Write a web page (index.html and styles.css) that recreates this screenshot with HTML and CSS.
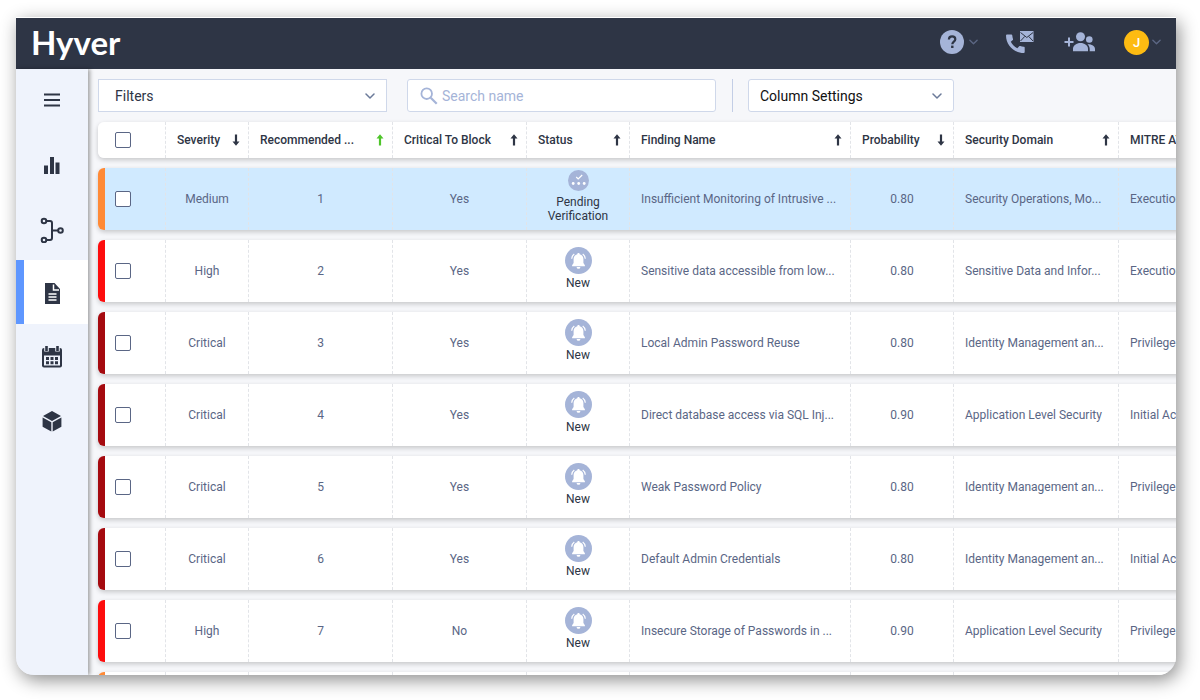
FILE: index.html
```html
<!DOCTYPE html>
<html lang="en">
<head>
<meta charset="utf-8">
<title>Hyver</title>
<link rel="stylesheet" href="styles.css">
</head>
<body>
<svg class="sprite" aria-hidden="true">
  <symbol id="chevron" viewBox="0 0 10 6"><path d="M1 1l4 4 4-4" fill="none" stroke="currentColor" stroke-width="1.5" stroke-linecap="round" stroke-linejoin="round"/></symbol>
  <symbol id="up" viewBox="0 0 8 12"><path d="M4 .3L7.500 4.500H5.100V11.500H2.900V4.500H.5z" fill="currentColor"/></symbol>
  <symbol id="down" viewBox="0 0 8 12"><path d="M4 11.700L.5 7.500H2.900V.5H5.100V7.500H7.500z" fill="currentColor"/></symbol>
  <symbol id="bell" viewBox="0 0 27 27"><circle cx="13.500" cy="13.500" r="13.500" fill="#a5b4d8"/><path d="M13.500 6c.7 0 1.200.5 1.200 1.200 2.500.6 3.700 2.500 3.700 4.800v4l1.500 2.300v.9H7.100v-.9l1.500-2.300v-4c0-2.300 1.200-4.200 3.700-4.800 0-.7.500-1.200 1.200-1.200zM11.600 19.900h3.800a1.900 1.900 0 0 1-3.800 0z" fill="#fff"/><path d="M9.300 6.900C7.700 8 6.900 9.600 6.700 11.700M17.700 6.900c1.600 1.100 2.400 2.700 2.600 4.800" fill="none" stroke="#fff" stroke-width="1.200"/></symbol>
  <symbol id="pending" viewBox="0 0 21 21"><circle cx="10.500" cy="10.500" r="10.500" fill="#a5b4d8"/><path d="M8.200 7l2 2 4-4" fill="none" stroke="#fff" stroke-width="1.200"/><g fill="#fff"><circle cx="5.200" cy="13.500" r="1.400"/><circle cx="10.700" cy="13.500" r="1.400"/><circle cx="16.200" cy="13.500" r="1.400"/></g></symbol>
</svg>

<div class="window">
  <header class="topbar">
    <div class="brand">Hyver</div>
    <div class="actions">
      <button class="icon-btn help" aria-label="Help">
        <svg width="24" height="24" viewBox="0 0 24 24"><circle cx="12" cy="12" r="12" fill="#a5b4d8"/><path d="M8.900 9.600c0-2 1.300-3.200 3.200-3.200s3.200 1.100 3.200 2.800c0 2.400-3 2.500-3 5" fill="none" stroke="#2e3545" stroke-width="2.200"/><rect x="11.100" y="15.600" width="2.400" height="2.400" fill="#2e3545"/></svg>
        <svg class="chev" width="9" height="6"><use href="#chevron"/></svg>
      </button>
      <button class="icon-btn contact" aria-label="Contact">
        <svg width="28" height="24" viewBox="0 0 28 24"><path d="M1 4.500h4.300c.6 0 .9.300 1 .9.100 1.300.3 2.400.7 3.500.100.400 0 .8-.2 1.100L4.800 11.800c1.500 3 3.600 5 6.500 6.500l1.900-2c.3-.3.700-.4 1.100-.2 1.100.4 2.200.6 3.400.6.600 0 1 .4 1 .9V22c0 .6-.4.900-1 .9C8 22.900 0 15 0 5.400c0-.6.400-.9 1-.9z" fill="#a5b4d8"/><rect x="14" y="1" width="13.500" height="11" fill="#a5b4d8"/><path d="M14.500 2.500l6.300 5 6.300-5M14.500 11l4.300-4.600M27 11l-4.300-4.600" fill="none" stroke="#2e3545"/></svg>
      </button>
      <button class="icon-btn invite" aria-label="Invite users">
        <svg width="32" height="20" viewBox="0 0 32 20"><path d="M5 5.500v9M.5 10h9" stroke="#a5b4d8" stroke-width="2"/><g fill="#a5b4d8"><circle cx="16.500" cy="4.700" r="4.500"/><path d="M9 19.300v-2.500c0-3.300 3.500-5.800 7.500-5.800s7.500 2.500 7.500 5.800v2.500z"/><circle cx="25.300" cy="7.500" r="3.300"/><path d="M23.500 12.200c4.500 0 7.500 2 7.500 4.800v2.300h-5.300v-2.300c0-2-.8-3.500-2.200-4.800z"/></g></svg>
      </button>
      <button class="icon-btn account" aria-label="Account">
        <span class="avatar">J</span>
        <svg class="chev" width="9" height="6"><use href="#chevron"/></svg>
      </button>
    </div>
  </header>

  <div class="body">
    <nav class="sidebar">
      <button class="nav-item menu" aria-label="Menu"><svg width="24" height="24" viewBox="0 0 24 24"><path d="M4 5.500h16M4 11h16M4 16.500h16" stroke="currentColor" stroke-width="2"/></svg></button>
      <a class="nav-item" href="#dashboard" aria-label="Dashboard"><svg width="24" height="28" viewBox="0 0 24 28"><path d="M4 15.500h4V24H4zM10 7h4v17h-4zM15.500 12.500h4V24h-4z" fill="currentColor"/></svg></a>
      <a class="nav-item" href="#paths" aria-label="Attack paths"><svg width="24" height="30" viewBox="0 0 24 30"><g fill="none" stroke="currentColor" stroke-width="2"><circle cx="4" cy="8" r="2.300"/><circle cx="4" cy="27" r="2.300"/><circle cx="20.500" cy="17.500" r="2.300"/><path d="M6.300 8H10q2 0 2 2v15q0 2-2 2H6.300M12 17.500h6.200"/></g></svg></a>
      <a class="nav-item active" href="#findings" aria-label="Findings" aria-current="page"><svg width="24" height="24" viewBox="0 0 24 24"><path d="M5 3h9.500L20 9v15H5z" fill="currentColor"/><path d="M13.500 4.500V10H19" fill="none" stroke="#fff" stroke-width="1.500"/><path d="M8.500 14h8M8.500 17h8M8.500 20h8" stroke="#fff" stroke-width="1.300"/></svg></a>
      <a class="nav-item" href="#calendar" aria-label="Calendar"><svg width="24" height="24" viewBox="0 0 24 24"><path d="M4 4h16q2 0 2 2v15.500q0 2-2 2H4q-2 0-2-2V6q0-2 2-2z" fill="currentColor"/><path d="M4 11.500h16v10H4z" fill="#eff3fc"/><path d="M6.500 2.500v5M17.500 2.500v5" stroke="#eff3fc" stroke-width="4.500"/><path d="M6.500 2v5M17.500 2v5" stroke="currentColor" stroke-width="2.600"/><path d="M6 14.500h12M6 18.700h12" stroke="currentColor" stroke-width="3" stroke-dasharray="3 1.500"/></svg></a>
      <a class="nav-item" href="#assets" aria-label="Assets"><svg width="24" height="24" viewBox="0 0 24 24"><path d="M12 3l9 5-9 5-9-5zM2.600 9.500l8.700 4.800v9.300L2.600 18.700zM21.400 9.500l-8.700 4.800v9.300l8.700-4.900z" fill="currentColor"/></svg></a>
    </nav>

    <main class="content">
      <div class="toolbar">
        <div class="select filters"><select aria-label="Filters"><option>Filters</option></select><svg width="10" height="6"><use href="#chevron"/></svg></div>
        <label class="search"><svg width="18" height="18" viewBox="0 0 18 18"><circle cx="6.700" cy="6.700" r="5.300" fill="none" stroke="currentColor" stroke-width="1.800"/><path d="M10.700 10.700l6 6" stroke="currentColor" stroke-width="2.200"/></svg><input type="text" placeholder="Search name" aria-label="Search name"></label>
        <div class="divider"></div>
        <div class="select columns"><select aria-label="Column Settings"><option>Column Settings</option></select><svg width="10" height="6"><use href="#chevron"/></svg></div>
      </div>

      <table class="findings">
        <colgroup><col class="c-check"><col class="c-severity"><col class="c-order"><col class="c-block"><col class="c-status"><col class="c-name"><col class="c-prob"><col class="c-domain"><col class="c-mitre"></colgroup>
        <thead>
          <tr>
            <th><input type="checkbox" aria-label="Select all"></th>
            <th><button class="sort">Severity<svg width="8" height="12"><use href="#down"/></svg></button></th>
            <th><button class="sort sorted">Recommended ...<svg width="8" height="12"><use href="#up"/></svg></button></th>
            <th><button class="sort">Critical To Block<svg width="8" height="12"><use href="#up"/></svg></button></th>
            <th><button class="sort">Status<svg width="8" height="12"><use href="#up"/></svg></button></th>
            <th><button class="sort">Finding Name<svg width="8" height="12"><use href="#up"/></svg></button></th>
            <th><button class="sort">Probability<svg width="8" height="12"><use href="#down"/></svg></button></th>
            <th><button class="sort">Security Domain<svg width="8" height="12"><use href="#up"/></svg></button></th>
            <th><button class="sort">MITRE ATT&amp;CK</button></th>
          </tr>
        </thead>
        <tbody>
          <tr class="medium selected"><td><input type="checkbox" aria-label="Select finding 1"></td><td>Medium</td><td>1</td><td>Yes</td><td class="status pending"><svg width="21" height="21"><use href="#pending"/></svg><span>Pending Verification</span></td><td class="text">Insufficient Monitoring of Intrusive ...</td><td>0.80</td><td class="text">Security Operations, Mo...</td><td class="text">Execution</td></tr>
          <tr class="high"><td><input type="checkbox" aria-label="Select finding 2"></td><td>High</td><td>2</td><td>Yes</td><td class="status"><svg width="27" height="27"><use href="#bell"/></svg><span>New</span></td><td class="text">Sensitive data accessible from low...</td><td>0.80</td><td class="text">Sensitive Data and Infor...</td><td class="text">Execution</td></tr>
          <tr class="critical"><td><input type="checkbox" aria-label="Select finding 3"></td><td>Critical</td><td>3</td><td>Yes</td><td class="status"><svg width="27" height="27"><use href="#bell"/></svg><span>New</span></td><td class="text">Local Admin Password Reuse</td><td>0.80</td><td class="text">Identity Management an...</td><td class="text">Privilege Escalation</td></tr>
          <tr class="critical"><td><input type="checkbox" aria-label="Select finding 4"></td><td>Critical</td><td>4</td><td>Yes</td><td class="status"><svg width="27" height="27"><use href="#bell"/></svg><span>New</span></td><td class="text">Direct database access via SQL Inj...</td><td>0.90</td><td class="text">Application Level Security</td><td class="text">Initial Access</td></tr>
          <tr class="critical"><td><input type="checkbox" aria-label="Select finding 5"></td><td>Critical</td><td>5</td><td>Yes</td><td class="status"><svg width="27" height="27"><use href="#bell"/></svg><span>New</span></td><td class="text">Weak Password Policy</td><td>0.80</td><td class="text">Identity Management an...</td><td class="text">Privilege Escalation</td></tr>
          <tr class="critical"><td><input type="checkbox" aria-label="Select finding 6"></td><td>Critical</td><td>6</td><td>Yes</td><td class="status"><svg width="27" height="27"><use href="#bell"/></svg><span>New</span></td><td class="text">Default Admin Credentials</td><td>0.80</td><td class="text">Identity Management an...</td><td class="text">Initial Access</td></tr>
          <tr class="high"><td><input type="checkbox" aria-label="Select finding 7"></td><td>High</td><td>7</td><td>No</td><td class="status"><svg width="27" height="27"><use href="#bell"/></svg><span>New</span></td><td class="text">Insecure Storage of Passwords in ...</td><td>0.90</td><td class="text">Application Level Security</td><td class="text">Privilege Escalation</td></tr>
          <tr class="medium"><td></td><td></td><td></td><td></td><td></td><td></td><td></td><td></td><td></td></tr>
        </tbody>
      </table>
    </main>
  </div>
</div>
</body>
</html>
```
FILE: styles.css
```css
* { box-sizing: border-box; }

body {
  margin: 0;
  padding: 17px 24px 25px 16px;
  height: 100vh;
  overflow: hidden;
  background: #fff;
  font-family: Roboto, "Liberation Sans", sans-serif;
  font-size: 12px;
  color: #2e3545;
}

button, input, select { font: inherit; color: inherit; }
button { padding: 0; border: 0; background: none; }
svg { display: block; flex: none; }
.sprite { position: absolute; width: 0; height: 0; }

.window {
  height: 100%;
  display: flex;
  flex-direction: column;
  overflow: hidden;
  border-top: 1px solid #fff;
  border-radius: 0 0 18px 18px;
  background: #f6f7fa;
  box-shadow: 3px 5px 18px rgba(0, 0, 0, .45);
}

.topbar {
  flex: none;
  height: 51px;
  display: flex;
  align-items: center;
  justify-content: space-between;
  padding: 0 15px 3px;
  background: #2e3545;
}

.brand {
  font: 700 33px/40px Lato, sans-serif;
  color: #fff;
}

.actions { display: flex; align-items: center; gap: 28px; }
.icon-btn { display: flex; align-items: center; gap: 5px; }
.invite { margin-left: 2px; }
.account { gap: 3px; }
.chev { color: #5c6784; }

.avatar {
  width: 25px;
  height: 25px;
  border-radius: 50%;
  background: #fdbb12;
  color: #fff;
  font-size: 13px;
  font-weight: 500;
  line-height: 25px;
  text-align: center;
}

.body { flex: 1; min-height: 0; display: flex; }

.sidebar {
  flex: none;
  width: 72px;
  z-index: 1;
  background: #eff3fc;
  box-shadow: 2px 0 4px rgba(0, 0, 0, .35);
}

.nav-item {
  width: 100%;
  height: 64px;
  display: flex;
  align-items: center;
  justify-content: center;
  color: #2e3545;
}
.nav-item.menu { height: 63px; }
.nav-item.active {
  background: #fff;
  border-left: 8px solid #5f97ff;
  padding-right: 8px;
}

.content { flex: 1; min-width: 0; padding: 10px 0 0 10px; overflow: hidden; }

.toolbar { display: flex; height: 33px; font-size: 14px; }

.select { position: relative; }
.select select {
  width: 100%;
  height: 100%;
  padding: 0 11px;
  appearance: none;
  border: 1px solid #cfd8ea;
  border-radius: 3px;
  background: #fff;
}
.select svg { position: absolute; right: 12px; top: 14px; color: #6b7a99; pointer-events: none; }
.filters { flex: 0 1 289px; }
.filters select { padding: 0 16px; border-radius: 0; }
.columns { flex: 0 1 206px; color: #111; }

.search {
  flex: 0 1 309px;
  display: flex;
  align-items: center;
  gap: 4px;
  margin-left: 20px;
  padding: 0 12px;
  border: 1px solid #cfd8ea;
  border-radius: 3px;
  background: #fff;
  color: #a5b4d8;
}
.search input { flex: 1; min-width: 0; padding: 0; border: 0; outline: 0; background: none; }
.search input::placeholder { color: #a5b4d8; opacity: 1; }

.divider { width: 1px; margin: 0 15px 0 16px; background: #c3cee6; }

.findings {
  width: 1201px;
  table-layout: fixed;
  border-spacing: 0 10px;
}
.c-check { width: 68px; }
.c-status, .c-prob { width: 103px; }
.c-severity { width: 83px; }
.c-order { width: 144px; }
.c-block { width: 134px; }
.c-name { width: 221px; }
.c-domain { width: 165px; }
.c-mitre { width: 180px; }

tr { border-radius: 6px; box-shadow: 0 2px 5px rgba(0, 0, 0, .2); }

th, td {
  padding: 0;
  background: #fff;
  border-right: 1px dashed #e2e4e8;
  white-space: nowrap;
}
th { height: 36px; font-weight: 500; }
td { height: 62px; text-align: center; color: #5a6685; }
.text { padding-left: 11px; text-align: left; }
.selected td { background: #d0eaff; }

th:first-child, td:first-child { text-align: left; border-radius: 6px 0 0 6px; }
th:first-child { padding-left: 17px; }
td:first-child { padding-left: 10px; border-left: 7px solid; }
.medium td:first-child { border-left-color: #ff8a36; }
.high td:first-child { border-left-color: #fd0d0d; }
.critical td:first-child { border-left-color: #a50a0f; }

input[type="checkbox"] {
  display: block;
  width: 16px;
  height: 16px;
  margin: 0;
  appearance: none;
  border: 1px solid #5a6685;
  border-radius: 2px;
  background: #fff;
}

.sort {
  width: 100%;
  display: flex;
  align-items: center;
  justify-content: space-between;
  padding: 0 8px 0 11px;
}
.sorted svg { color: #4fc52b; }

.selected .status, .status {
  padding-bottom: 6px;
  line-height: 14px;
  color: #2e3545;
  white-space: normal;
}
.status svg { margin: 0 auto 2px; }
.status.pending svg { margin-bottom: 4px; }
.status span { display: block; }
```
